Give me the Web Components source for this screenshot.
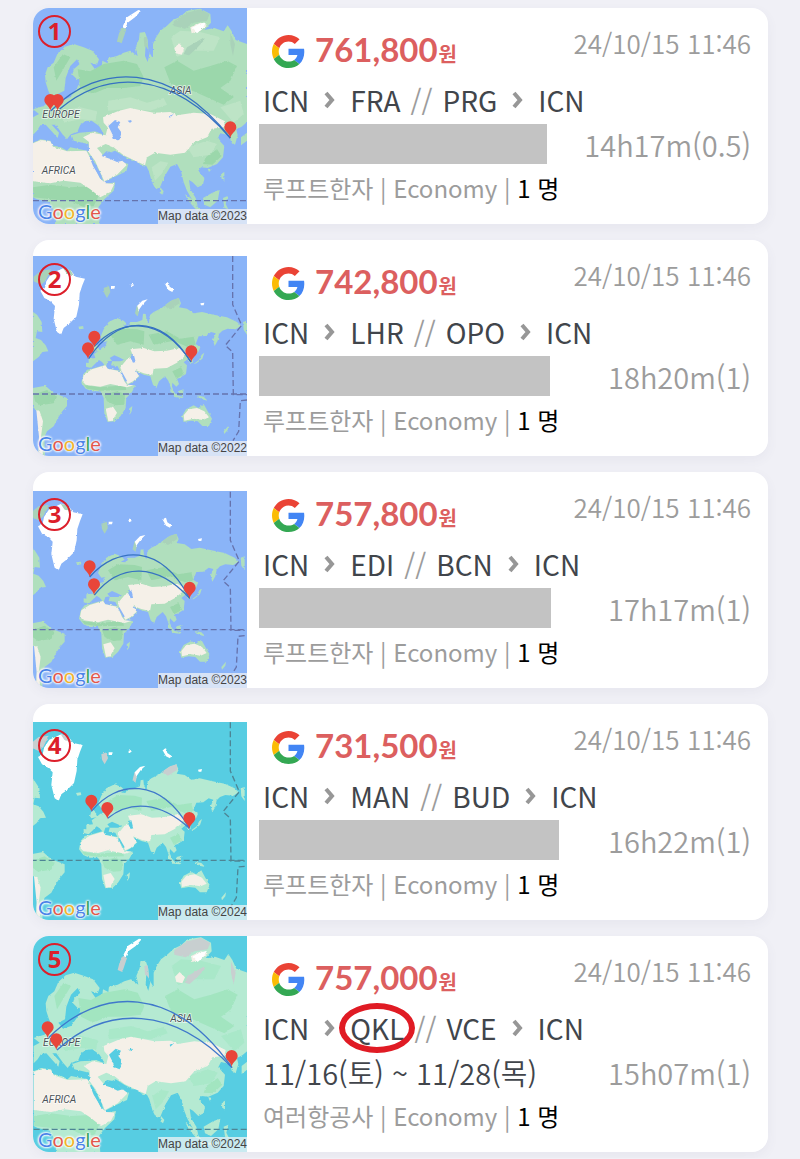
<!DOCTYPE html>
<html lang="ko">
<head>
<meta charset="utf-8">
<meta name="viewport" content="width=device-width, initial-scale=1">
<title>항공권 목록</title>
<style>
body { margin: 0; background: #f0f0f6; font-family: "Noto Sans CJK KR", "Noto Sans", sans-serif; }
</style>
</head>
<body>
<fare-list>
  <fare-card price="761,800" searched="24/10/15 11:46" route="ICN FRA PRG ICN" duration="14h17m(0.5)" airline="루프트한자" bar="288">
    <route-map slot="map" region="eurasia" number="1" year="2023"></route-map>
  </fare-card>
  <fare-card price="742,800" searched="24/10/15 11:46" route="ICN LHR OPO ICN" duration="18h20m(1)" airline="루프트한자" bar="291">
    <route-map slot="map" region="world" number="2" year="2022"></route-map>
  </fare-card>
  <fare-card price="757,800" searched="24/10/15 11:46" route="ICN EDI BCN ICN" duration="17h17m(1)" airline="루프트한자" bar="292">
    <route-map slot="map" region="world" number="3" year="2023"></route-map>
  </fare-card>
  <fare-card price="731,500" searched="24/10/15 11:46" route="ICN MAN BUD ICN" duration="16h22m(1)" airline="루프트한자" bar="300">
    <route-map slot="map" region="world" number="4" year="2024"></route-map>
  </fare-card>
  <fare-card price="757,000" searched="24/10/15 11:46" route="ICN QKL VCE ICN" marked="QKL" duration="15h07m(1)" airline="여러항공사" dates="11/16(토) ~ 11/28(목)">
    <route-map slot="map" region="eurasia" number="5" year="2024"></route-map>
  </fare-card>
</fare-list>

<script>
const LAND = {
  world: `
    <path class="land" d="M205 385L205 372L225 370L221 358L238 346L247 338L258 334L256 326L262 320L250 322L240 308L250 284L265 262L290 250L310 258L320 268L308 274L322 276L330 262L350 262L366 256L368 238L376 236L378 254L386 266L388 242L400 232L424 220L450 200L475 190L482 206L476 218L500 222L520 236L545 232L580 240L620 248L650 262L662 274L646 284L622 282L606 288L596 298L592 318L583 334L578 316L586 296L572 292L556 304L535 305L526 328L540 338L534 352L520 360L516 370L518 384L508 384L504 372L490 383L500 392L497 418L478 430L470 432L476 448L468 456L456 444L455 456L464 478L455 470L444 438L434 425L416 440L408 460L398 450L390 425L370 420L345 408L338 410L358 424L338 442L320 452L304 420L292 395L272 392L276 378L262 380L257 396L245 382L236 376L226 386L212 400L197 396L197 384Z"/>
    <path class="land" d="M215 402L255 390L262 402L300 408L318 450L345 452L335 472L318 490L316 520L300 545L284 560L262 562L252 534L250 490L240 470L215 470L196 462L183 445L188 420L200 405Z"/>
    <path class="land" d="M38 460L75 453L100 475L140 490L140 514L126 530L114 548L100 575L80 590L72 608L74 664L54 664L56 610L62 560L52 534L38 512ZM38 232L50 240L64 262L66 292L50 290L46 310L62 316L76 332L84 350L66 352L56 366L38 380Z"/>
    <path class="land" d="M485 545L497 524L520 512L534 520L550 508L562 530L575 552L566 574L546 574L532 560L512 558L490 562ZM216 346L222 324L230 330L238 348L220 352ZM174 276L188 274L190 282L178 284ZM326 522L336 514L334 530L328 540ZM536 376L544 360L552 354L546 372L528 386L520 388ZM450 462L470 482L490 486L486 490L466 488L450 470ZM476 468L490 464L488 482L476 480ZM530 482L550 486L562 498L544 494ZM668 262L680 258L680 300L670 286ZM610 590L624 574L622 586L612 598Z"/>
    <path class="forest" d="M270 300L300 282L350 284L372 290L370 330L330 320L290 330ZM385 300L440 290L480 312L520 306L526 330L500 336L460 318L400 330ZM252 480L290 470L314 478L312 510L286 512L260 500ZM40 480L80 466L110 486L100 506L60 512L44 500ZM456 410L482 398L492 418L468 432ZM192 452L240 458L314 452L318 466L240 468L200 462Z"/>
    <path class="sand" d="M190 420L215 404L255 392L262 402L300 410L312 440L320 450L340 452L320 458L270 448L240 456L196 450L186 440ZM300 398L320 374L340 368L330 344L370 340L402 350L440 348L478 340L500 352L490 368L470 384L440 400L400 402L396 422L370 416L345 406L356 424L338 440L322 448L306 420ZM256 522L278 516L290 534L276 558L264 560ZM490 542L505 524L530 520L552 530L566 548L548 556L520 552L492 558ZM48 526L58 530L68 560L62 606L68 660L54 664L56 606Z"/>
    <path class="sea" d="M268 370L282 362L296 368L312 376L300 380L276 380ZM330 360L340 358L346 382L338 384L332 372Z"/>
    <path class="rift" d="M302 412L318 440"/>
    <path class="ice" d="M60 168L74 160L78 140L94 116L130 100L152 108L166 126L194 132L186 152L178 176L176 210L168 246L148 266L130 280L122 300L110 292L100 252L104 214L90 200L72 190ZM433 146L444 142L448 156L460 164L456 172L444 166ZM352 232L350 214L366 198L382 194L368 208L358 222ZM331 150L338 147L341 152L334 156ZM540 206L552 204L550 212L542 212ZM272 154L284 154L282 162L272 162Z"/>
    <path class="tundra" d="M40 126L62 108L92 104L76 138L62 150L40 140ZM430 214L456 196L476 190L478 206L450 224ZM250 160L266 154L270 172L260 190L252 176ZM344 236L350 212L356 230L352 246ZM128 100L150 106L160 122L140 118Z"/>
    <path class="line" d="M38 478L680 478"/>
    <path class="line" d="M637 64L637 210L664 272L615 332L637 352L639 480L680 480M680 496L660 498L655 590L638 618"/>`,
  eurasia: `
    <path class="land" d="M76 245L74 222L82 200L100 186L112 158L134 138L160 130L190 140L216 150L236 176L230 192L210 186L224 206L244 198L246 180L262 188L264 172L290 166L310 156L330 150L352 166L346 140L356 116L358 96L374 94L382 118L384 150L398 174L398 130L406 112L420 90L440 75L458 58L480 48L500 30L540 24L570 40L572 66L552 88L582 82L610 92L622 74L634 92L646 118L680 130L680 364L664 378L648 386L652 404L644 432L632 424L628 404L600 398L592 414L612 436L608 470L590 490L562 502L542 500L534 510L552 532L548 552L532 560L516 544L506 538L510 566L526 592L532 616L518 602L500 570L490 545L482 512L470 490L450 498L432 528L418 562L406 566L395 545L385 510L378 496L360 492L350 480L335 480L310 466L284 450L274 454L284 474L304 484L324 490L318 512L290 525L250 545L240 520L220 480L208 462L204 430L186 426L160 420L154 404L178 396L204 394L222 390L250 402L240 384L222 370L206 376L196 362L180 372L172 392L150 402L140 416L126 400L106 372L94 372L116 396L112 412L94 392L76 372L60 374L50 390L38 402L38 350L56 340L38 326L70 316L96 296L84 270Z"/>
    <path class="land" d="M38 426L60 416L90 420L96 434L122 440L140 450L150 440L200 450L212 466L220 496L240 535L250 550L285 545L280 570L252 596L234 620L238 670L104 670L106 640L86 604L50 596L38 590Z"/>
    <path class="sea" d="M112 280L132 270L136 232L150 196L170 176L178 190L160 206L156 222L170 236L206 232L178 244L170 262L150 290L126 298ZM376 130L388 158L382 184L374 166Z"/>
    <path class="land" d="M662 410L680 396L680 420L662 434ZM602 520L612 514L612 540L604 536ZM548 592L576 576L598 568L592 600L570 620L552 612ZM494 580L520 600L540 630L526 626L502 598ZM608 592L622 586L616 610L624 626L612 622ZM420 560L430 572L426 582L418 576ZM562 504L574 506L566 514ZM540 636L580 642L580 648L540 644Z"/>
    <path class="forest" d="M172 206L210 212L250 190L310 180L350 190L370 230L360 256L310 262L260 262L216 280L180 262ZM432 200L470 180L520 210L570 196L620 180L650 196L630 240L600 262L640 290L610 312L560 290L520 272L480 262L450 246ZM556 470L590 446L604 466L576 492L548 490ZM38 560L90 552L150 560L220 556L236 584L220 616L190 620L150 600L90 596L40 590ZM100 200L128 160L150 170L126 210L108 240Z"/>
    <path class="leaf" d="M264 300L330 290L380 306L430 292L440 312L390 330L330 324L262 330ZM452 110L480 90L540 94L600 110L580 150L520 150L470 168ZM120 330L180 320L230 332L226 360L180 356L130 366ZM500 440L560 420L590 430L570 462L520 470ZM394 500L420 482L444 486L424 520L404 540ZM600 320L660 300L670 340L640 366Z"/>
    <path class="sand" d="M38 428L62 418L90 422L98 438L140 452L198 450L214 480L238 532L256 548L282 550L270 574L240 590L210 566L180 546L130 540L90 548L38 542ZM248 350L296 330L330 322L370 330L400 336L450 334L470 344L520 336L570 340L614 362L610 380L574 384L560 410L520 426L494 456L450 462L404 456L380 470L374 494L340 478L310 464L280 440L256 430L230 442L250 466L276 456L320 492L290 522L252 542L224 480L206 456L206 424L188 410L216 396L256 404L262 380L250 366ZM462 142L476 128L492 144L484 162L466 158ZM510 80L540 66L560 72L540 90L514 98Z"/>
    <path class="sea" d="M180 378L194 362L214 360L236 376L250 400L226 392L196 394L176 390ZM264 376L284 358L300 364L292 380L304 396L296 420L280 414L274 396Z"/>
    <path class="sea" d="M206 466L216 472L244 526L242 536L218 496ZM244 466L268 474L290 484L306 480L280 456L258 452ZM448 352L460 340L446 346ZM322 360L334 358L328 366Z"/>
    <path class="ice" d="M306 80L320 50L354 28L362 30L344 50L322 66L314 84ZM514 82L536 70L558 64L546 84L530 98Z"/>
    <path class="tundra" d="M306 80L318 86L304 128L290 122L296 98ZM460 62L500 36L540 26L568 40L560 60L520 66L494 84L460 76ZM500 140L548 112L552 118L530 142L506 164L490 160ZM370 110L380 108L384 146L372 134ZM630 96L644 130L638 166L630 130Z"/>
    <path class="line" d="M38 600L680 600"/>
    <g class="name"><text x="66" y="351">EUROPE</text><text x="448" y="279">ASIA</text><text x="64" y="520">AFRICA</text></g>`
};
const TRIPS = {
  1: { box: "38 22 642 648", move: "0 0", arcs: ["M92 330C240 182 450 185 630 412", "M118 325C260 206 450 206 630 412"], pins: [[90, 330], [112, 330], [630, 412]] },
  2: { box: "38 64 642 600", move: "0 0", arcs: ["M205 372C290 240 420 235 512 382", "M222 335C300 252 420 240 512 382"], pins: [[222, 338], [203, 373], [513, 382]] },
  3: { box: "38 70 642 591", move: "-7 8", arcs: ["M208 328C290 235 420 225 508 392", "M222 382C300 285 410 285 508 392"], pins: [[208, 328], [221, 382], [508, 392]] },
  4: { box: "38 66 642 594", move: "-7 3", arcs: ["M213 334C290 240 420 230 507 385", "M262 355C330 300 420 305 507 385"], pins: [[213, 334], [261, 356], [507, 386]] },
  5: { box: "38 20 642 648", move: "2 0", arcs: ["M85 325C240 170 460 165 635 415", "M110 362C260 225 460 230 635 415"], pins: [[82, 326], [108, 362], [634, 412]] }
};

customElements.define("route-map", class extends HTMLElement {
  connectedCallback() {
    const n = this.getAttribute("number"), trip = TRIPS[n];
    const arcs = trip.arcs.map(d => `<path class="arc" d="${d}"/>`).join("");
    const pins = trip.pins.map(([x, y]) => `<path class="pin" transform="translate(${x} ${y})" d="M0 0C-3 -15 -18 -19 -18 -32A18 18 0 1 1 18 -32C18 -19 3 -15 0 0Z"/>`).join("");
    const teal = this.getAttribute("year") === "2024";
    this.attachShadow({ mode: "open" }).innerHTML = `
<style>
:host { display: block; position: relative; --water: ${teal ? "#57cde2" : "#8ab4f8"}; }
svg { display: block; width: 100%; height: auto; background: var(--water); }
.land { fill: ${teal ? "#b5ead2" : "#b0dfbd"}; }
.forest { fill: ${teal ? "#a2e5c0" : "#9bd7ab"}; }
.leaf { fill: ${teal ? "#a9e8c9" : "#bde4c6"}; }
.sand { fill: #f5f0e8; }
.ice { fill: #fff; }
.tundra { fill: ${teal ? "#c8cfd0" : "#a9d2b9"}; }
.sea { fill: var(--water); }
.rift { fill: none; stroke: var(--water); stroke-width: 5; }
.line { fill: none; stroke: ${teal ? "#4d8595" : "#6673ad"}; stroke-width: 4; stroke-dasharray: 18 9; }
.arc { fill: none; stroke: ${teal ? "#3f78cb" : "#3672c2"}; stroke-width: 4; }
.pin { fill: #e8453a; }
.name { font: italic 31px Roboto, sans-serif; fill: #4c5358; paint-order: stroke; stroke: #ffffffb0; stroke-width: 5; }
.number { position: absolute; left: 5px; top: 7px; box-sizing: border-box; width: 33px; height: 33px; border: 2px solid #dc1f2b; border-radius: 50%; color: #dc1f2b; font: bold 24px/28px "Noto Sans", sans-serif; text-align: center; }
.logo { position: absolute; left: 5px; bottom: 0; font: 20px/26px Lato, sans-serif; color: #4b84e8; text-shadow: 0 0 2px #fff, 0 0 2px #fff, 0 0 3px #fff, 0 0 3px #fff; }
.r { color: #e2574c; } .y { color: #f0b429; } .g { color: #3ba55a; }
.credit { position: absolute; right: 0; bottom: 0; background: #f5f5f5b8; color: #444; font: 12px/15px "Liberation Sans", sans-serif; white-space: nowrap; }
</style>
<svg viewBox="${trip.box}" aria-hidden="true">
  <filter id="coast" x="0" y="0" width="100%" height="100%"><feTurbulence type="fractalNoise" baseFrequency="0.12" numOctaves="2" seed="4"/><feDisplacementMap in="SourceGraphic" scale="7" xChannelSelector="R" yChannelSelector="G"/></filter>
  <g transform="translate(${trip.move})">${LAND[this.getAttribute("region")].replace(/^/, '<g filter="url(#coast)">').replace(/<path class="line"/, '</g><path class="line"')}</g>
  ${arcs}${pins}
</svg>
<span class="number">${n}</span>
<span class="logo">G<span class="r">o</span><span class="y">o</span>g<span class="g">l</span><span class="r">e</span></span>
<span class="credit">Map data ©${this.getAttribute("year")}</span>`;
  }
});

customElements.define("google-mark", class extends HTMLElement {
  connectedCallback() {
    this.attachShadow({ mode: "open" }).innerHTML = `
<style>:host { display: block; width: 33px; height: 33px; } svg { display: block; width: 100%; height: 100%; }</style>
<svg viewBox="0 0 48 48" role="img" aria-label="Google">
<path fill="#EA4335" d="M24 9.5c3.54 0 6.71 1.22 9.21 3.6l6.85-6.85C35.9 2.38 30.47 0 24 0 14.62 0 6.51 5.38 2.56 13.22l7.98 6.19C12.43 13.72 17.74 9.5 24 9.5z"/>
<path fill="#4285F4" d="M46.98 24.55c0-1.57-.15-3.09-.38-4.55H24v9.02h12.94c-.58 2.96-2.26 5.48-4.78 7.18l7.73 6c4.51-4.18 7.09-10.36 7.09-17.65z"/>
<path fill="#FBBC05" d="M10.53 28.59c-.48-1.45-.76-2.99-.76-4.59s.27-3.14.76-4.59l-7.98-6.19C.92 16.46 0 20.12 0 24c0 3.88.92 7.54 2.56 10.78l7.97-6.19z"/>
<path fill="#34A853" d="M24 48c6.48 0 11.93-2.13 15.89-5.81l-7.73-6c-2.15 1.45-4.92 2.3-8.16 2.3-6.26 0-11.57-4.22-13.47-9.91l-7.98 6.19C6.51 42.62 14.62 48 24 48z"/>
</svg>`;
  }
});

customElements.define("flight-route", class extends HTMLElement {
  connectedCallback() {
    const [a, b, c, d] = this.getAttribute("stops").split(" ");
    const marked = this.getAttribute("marked");
    const stop = s => `<span class="${s === marked ? "stop marked" : "stop"}">${s}</span>`;
    const arrow = `<svg viewBox="0 0 11 18" aria-hidden="true"><path d="M2 2L8 9L2 16"/></svg>`;
    this.attachShadow({ mode: "open" }).innerHTML = `
<style>
:host { display: flex; align-items: center; font-size: 28px; line-height: 42px; color: #41454b; }
svg { width: 11px; height: 18px; margin: 0 15px; }
path { fill: none; stroke: #979797; stroke-width: 4; }
.stop { position: relative; }
.slash { margin: 0 10px; color: #9c9c9c; }
.marked::after { content: ""; position: absolute; inset: -4px -11px; border: 6px solid #e01b24; border-radius: 50%; }
</style>${stop(a)}${arrow}${stop(b)}<span class="slash">//</span>${stop(c)}${arrow}${stop(d)}`;
  }
});

customElements.define("fare-card", class extends HTMLElement {
  connectedCallback() {
    const at = k => this.getAttribute(k) || "";
    const dates = at("dates") ? `<span class="dates">${at("dates")}</span>` : `<span class="bar" style="--bar: ${at("bar")}px"></span>`;
    this.attachShadow({ mode: "open" }).innerHTML = `
<style>
:host { display: block; }
article { display: grid; grid-template-columns: 214px 1fr; background: #fff; border-radius: 16px; overflow: hidden; }
::slotted(route-map) { align-self: end; }
.info { display: flex; flex-direction: column; padding: 21px 17px 20px 16px; white-space: nowrap; }
.top, .when { display: flex; justify-content: space-between; }
.top { height: 44px; margin-bottom: 6px; }
.price { display: flex; align-items: center; gap: 10px; margin-left: 9px; color: #dc5f5f; font: bold 33px/44px Lato, "Noto Sans CJK KR", sans-serif; }
.won { font-size: 20px; margin-left: 1px; }
.date { color: #9c9c9c; font-size: 26px; line-height: 28px; }
.when { align-items: center; height: 40px; margin: 3px 0 8px; font-size: 29px; line-height: 40px; }
.date, .when { font-weight: 350; }
.bar { width: var(--bar); height: 40px; margin-left: -4px; background: #c3c3c3; }
.dates { color: #41454b; }
.time { color: #9c9c9c; }
.cabin { font-size: 24px; line-height: 32px; color: #9c9c9c; }
.cabin b { font-weight: 400; color: #000; }
</style>
<article>
  <slot name="map"></slot>
  <div class="info">
    <div class="top">
      <div class="price"><google-mark></google-mark><span>${at("price")}<span class="won">원</span></span></div>
      <span class="date">${at("searched")}</span>
    </div>
    <flight-route stops="${at("route")}" marked="${at("marked")}"></flight-route>
    <div class="when">${dates}<span class="time">${at("duration")}</span></div>
    <div class="cabin">${at("airline")} | Economy | <b>1 명</b></div>
  </div>
</article>`;
  }
});

customElements.define("fare-list", class extends HTMLElement {
  connectedCallback() {
    this.attachShadow({ mode: "open" }).innerHTML = `
<style>
:host { display: flex; flex-direction: column; gap: 16px; padding: 8px 32px 6px 33px; }
::slotted(fare-card) { border-radius: 16px; box-shadow: 0 4px 12px #5050780f; }
</style><slot></slot>`;
  }
});
</script>
</body>
</html>
